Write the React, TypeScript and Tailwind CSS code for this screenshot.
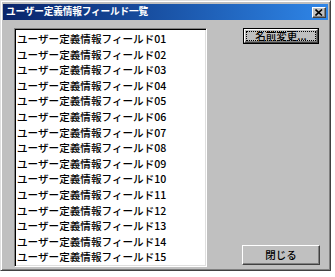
const items = Array.from({ length: 15 }, (_, i) => `ユーザー定義情報フィールド${String(i + 1).padStart(2, "0")}`);

const font = { fontFamily: '"Noto Sans CJK JP", "Noto Sans", sans-serif' };

export default function App() {
    return (
        <div className="w-[335px] h-[277px] bg-white" style={font}>
            <div className="w-[331px] h-[271px] bg-[#c0c0c0] border border-t-[#dfdfdf] border-l-[#dfdfdf] border-r-[#404040] border-b-[#404040] shadow-[inset_1px_1px_#fff,inset_-1px_-1px_#808080] p-[2px] pt-[3px] flex flex-col">
                <div className="h-[16px] bg-linear-to-r from-[#0a246a] to-[#2f86e8] flex items-center justify-between pl-[3px] pr-[2px]">
                    <span className="text-white font-bold text-[9.7px] leading-none tracking-[-0.2px]">ユーザー定義情報フィールド一覧</span>
                    <div className="w-[14px] h-[11px] bg-[#c0c0c0] border border-t-white border-l-white border-r-[#404040] border-b-[#404040] shadow-[inset_-1px_-1px_#808080] flex items-center justify-center">
                        <svg width="8" height="7" viewBox="0 0 8 7">
                            <path d="M0.5 0.5 L7 6.5 M7 0.5 L0.5 6.5" stroke="#000" strokeWidth="1.6" />
                        </svg>
                    </div>
                </div>
                <div className="flex-1 flex pl-[11px] pt-[8px] pb-[1px]">
                    <div className="w-[193px] h-[239px] bg-white border border-t-[#808080] border-l-[#808080] border-r-white border-b-white shadow-[inset_1px_1px_#000,inset_-1px_-1px_#dfdfdf] pl-[2px] pt-[2px] overflow-hidden">
                        {items.map((t) => (
                            <div key={t} className="h-[15.6px] leading-[15.6px] text-[10.6px] font-medium text-black whitespace-nowrap">
                                {t}
                            </div>
                        ))}
                    </div>
                    <div className="flex-1 flex flex-col items-end justify-between pr-[8px] pb-[2px]">
                        <div className="w-[76px] h-[16px] border border-black mr-[1px]">
                            <div className="w-full h-full bg-[#c0c0c0] border border-t-white border-l-white border-r-[#404040] border-b-[#404040] shadow-[inset_-1px_-1px_#808080] p-[1px]">
                                <div className="w-full h-full border border-dotted border-black flex items-center justify-center text-[10.5px] font-medium leading-none text-black">
                                    名前変更...
                                </div>
                            </div>
                        </div>
                        <div className="w-[78px] h-[20px] bg-[#c0c0c0] border border-t-white border-l-white border-r-[#404040] border-b-[#404040] shadow-[inset_-1px_-1px_#808080] flex items-center justify-center text-[10.5px] font-medium leading-none text-black">
                            閉じる
                        </div>
                    </div>
                </div>
            </div>
        </div>
    );
}
